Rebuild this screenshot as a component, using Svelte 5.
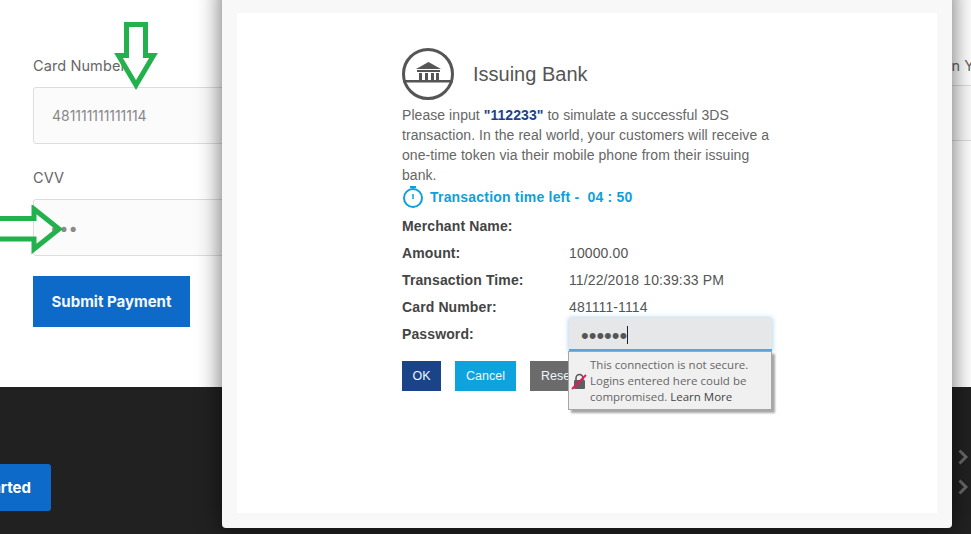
<script>
  const rows = [
    ['Merchant Name:', ''],
    ['Amount:', '10000.00'],
    ['Transaction Time:', '11/22/2018 10:39:33 PM'],
    ['Card Number:', '481111-1114']
  ];
</script>

<div class="page">
  <section class="form">
    <div class="column">
      <label class="lbl" for="card">Card Number</label>
      <div class="field" id="card">481111111111114</div>
      <label class="lbl cvv" for="cvv">CVV</label>
      <div class="field dots" id="cvv">•••</div>
      <button class="submit">Submit Payment</button>
    </div>
    <div class="column second">
      <span class="lbl">Expiration Year</span>
      <div class="field"></div>
    </div>
  </section>

  <footer class="foot">
    <div class="cta"><button class="start">Get Started</button></div>
    <div class="chevrons">
      <svg viewBox="0 0 10 16" width="10" height="16"><path d="M1.500 1.500 8 8l-6.500 6.500" /></svg>
      <svg viewBox="0 0 10 16" width="10" height="16"><path d="M1.500 1.500 8 8l-6.500 6.500" /></svg>
    </div>
  </footer>

  <svg class="arrow down" viewBox="0 0 46 70" width="46" height="70">
    <path d="M12.500 3.500h19v31h8L22 64 4.500 34.500h8z" />
  </svg>
  <svg class="arrow right" viewBox="0 0 66 50" width="66" height="50">
    <path d="M-4 13.500h38V4l25 20-25 20V34H-4z" />
  </svg>

  <div class="modal">
    <div class="card">
      <div class="content">
        <div class="title">
          <svg viewBox="0 0 52 52" width="52" height="52" class="bank">
            <circle cx="26" cy="26" r="24.500" />
            <path class="fill" d="M1 32h50v2.400H1zM14 21l12.500-7L39 21zM15 22h23v2H15zM17 25h3v7h-3zM23 25h3v7h-3zM29 25h3v7h-3zM34 25h3v7h-3z" />
          </svg>
          <h1>Issuing Bank</h1>
        </div>
        <p class="intro">Please input <b>"112233"</b> to simulate a successful 3DS transaction. In the real world, your customers will receive a one-time token via their mobile phone from their issuing bank.</p>
        <div class="timer">
          <svg viewBox="0 0 22 24" width="22" height="24">
            <path class="t" d="M8 2h6" />
            <circle class="t" cx="11" cy="13" r="9" />
            <path class="t thin" d="M11 9v5" />
          </svg>
          <span>Transaction time left -&nbsp; 04 : 50</span>
        </div>
        <div class="rows">
          {#each rows as r}
            <div class="row"><span class="k">{r[0]}</span><span class="v">{r[1]}</span></div>
          {/each}
          <div class="row pw">
            <span class="k">Password:</span>
            <div class="pwfield"><span class="pdots">••••••</span><i class="caret"></i></div>
          </div>
        </div>
        <div class="buttons">
          <button class="b ok">OK</button>
          <button class="b cancel">Cancel</button>
          <button class="b reset">Reset</button>
        </div>
      </div>
    </div>
  </div>

  <div class="tip">
    <svg viewBox="0 0 16 18" width="16" height="18" class="lock">
      <path class="shackle" d="M5 8V6a3.500 3.500 0 0 1 7 0v2" />
      <rect x="3" y="8" width="11" height="9" rx="1" class="body" />
      <path class="slash" d="M1 17 15 3" />
    </svg>
    <p>This connection is not secure. Logins entered here could be compromised. <span>Learn More</span></p>
  </div>
</div>

<style>
  :global(body) { margin: 0; background: #fff; }
  .page {
    position: relative;
    width: 971px;
    height: 534px;
    overflow: hidden;
    display: flex;
    flex-direction: column;
    font-family: "Liberation Sans", Arial, sans-serif;
  }
  .form {
    height: 387px;
    flex: none;
    display: flex;
    gap: 28px;
    padding: 0 0 0 33px;
    box-sizing: border-box;
    background: #fff;
  }
  .column { width: 830px; flex: none; display: flex; flex-direction: column; align-items: flex-start; padding-top: 56px; }
  .second { width: 400px; }
  .second .field { margin-top: 10px; height: 56px; }
  .lbl {
    font-family: "Inter", "Open Sans", sans-serif;
    font-size: 14.500px;
    line-height: 19px;
    color: #666;
    letter-spacing: 0.1px;
    white-space: nowrap;
  }
  .field {
    box-sizing: border-box;
    width: 100%;
    height: 57px;
    margin-top: 12px;
    background: #fbfbfb;
    border: 1px solid #ddd;
    border-radius: 3px;
    padding: 0 18px;
    display: flex;
    align-items: center;
    font-family: "Inter", sans-serif;
    font-size: 14px;
    letter-spacing: -0.03px;
    color: #888;
  }
  .cvv { margin-top: 24px; }
  .dots { letter-spacing: 0; font-size: 16.500px; color: #8a8a8a; padding-left: 16px; }
  .submit {
    margin-top: 20px;
    width: 157px;
    height: 51px;
    border: 0;
    background: #0d6ac9;
    color: #f4f8fc;
    font-family: "Inter", sans-serif;
    font-weight: 700;
    font-size: 15px;
    padding: 0;
  }
  .foot {
    flex: 1;
    background: #212121;
    display: flex;
    justify-content: space-between;
    position: relative;
  }
  .cta { width: 51px; height: 47px; margin-top: 77px; display: flex; justify-content: flex-end; }
  .start {
    flex: none;
    width: 130px;
    height: 47px;
    border: 0;
    border-radius: 3px;
    background: #0d6ac9;
    color: #fff;
    font-family: "Inter", sans-serif;
    font-weight: 700;
    font-size: 15px;
    padding: 0 20px 0 0;
    text-align: right;
    white-space: nowrap;
  }
  .chevrons { display: flex; flex-direction: column; gap: 14px; padding: 62px 3px 0 0; }
  .chevrons path { fill: none; stroke: #6a6a6a; stroke-width: 3; }
  .chevrons svg { display: block; }

  .arrow { position: absolute; overflow: hidden; }
  .arrow path { fill: none; stroke: #22b14c; stroke-width: 5; }
  .down { left: 114px; top: 21px; }
  .right { left: 0; top: 205px; }

  .modal {
    position: absolute;
    left: 222px;
    top: -20px;
    width: 730px;
    height: 548px;
    box-sizing: border-box;
    padding: 33px 15px 15px;
    background: #f8f8f8;
    border-radius: 4px;
    box-shadow: 0 0 24px rgba(0, 0, 0, 0.6);
  }
  .card { background: #fff; height: 100%; padding: 35px 0 0 165px; box-sizing: border-box; }
  .content { width: 372px; }
  .title { display: flex; align-items: center; gap: 19px; height: 52px; }
  h1 { margin: 0; font-weight: 400; font-size: 20px; color: #555; }
  .bank { flex: none; }
  .bank circle { fill: none; stroke: #555; stroke-width: 3; }
  .bank .fill { fill: #555; }
  .intro {
    margin: 5px 0 0;
    font-size: 14px;
    line-height: 20px;
    color: #666;
    letter-spacing: 0.06px;
  }
  .intro b { color: #1b4388; }
  .timer {
    display: flex;
    align-items: center;
    gap: 6px;
    height: 24px;
    color: #0f9fdb;
    font-weight: 700;
    font-size: 14px;
    letter-spacing: 0.2px;
  }
  .timer svg { flex: none; margin-top: -1px; }
  .t { fill: none; stroke: #0f9fdb; stroke-width: 2; }
  .t.thin { stroke-width: 1.500; }
  .rows { margin-top: 3px; }
  .row { display: flex; align-items: center; height: 27px; font-size: 14px; color: #444; letter-spacing: 0.12px; }
  .k { width: 167px; flex: none; font-weight: 700; }
  .v { color: #555; }
  .pw { position: relative; }
  .pwfield {
    position: relative;
    box-sizing: border-box;
    width: 203px;
    height: 34px;
    flex: none;
    background: #e6e7e8;
    border-bottom: 3px solid #5ba3dd;
    box-shadow: 0 0 5px rgba(91, 163, 221, 0.6);
    padding: 5px 0 0 12px;
    display: flex;
    align-items: flex-start;
    margin-top: 2px;
    color: #555;
  }
  .pdots { font-size: 22px; line-height: 25px; letter-spacing: 0; }
  .caret { width: 1px; height: 18px; margin-top: 3px; background: #222; }
  .buttons { display: flex; gap: 14px; margin-top: 14px; }
  .b {
    height: 30px;
    border: 0;
    color: #eef6fb;
    font-family: "Liberation Sans", Arial, sans-serif;
    font-size: 12.500px;
    padding: 0;
  }
  .ok { width: 39px; background: #1b4388; }
  .cancel { width: 61px; background: #0fa3dd; }
  .reset { width: 60px; background: #6b6b6b; text-align: left; padding-left: 11px; }

  .tip {
    position: absolute;
    left: 568px;
    top: 351px;
    width: 204px;
    height: 59px;
    box-sizing: border-box;
    background: #f0f0f0;
    border: 1px solid #a6a6a6;
    box-shadow: 3px 3px 2px rgba(0, 0, 0, 0.35);
    padding: 5px 4px 0 21px;
  }
  .tip p {
    margin: 0;
    font-family: "Open Sans", sans-serif;
    font-size: 11.500px;
    line-height: 16px;
    color: #666;
  }
  .tip p span { color: #444; }
  .lock { position: absolute; left: 2px; top: 20px; }
  .shackle { fill: none; stroke: #555; stroke-width: 1.500; }
  .body { fill: #5e5e5e; }
  .slash { stroke: #e8175d; stroke-width: 2; fill: none; }
</style>
